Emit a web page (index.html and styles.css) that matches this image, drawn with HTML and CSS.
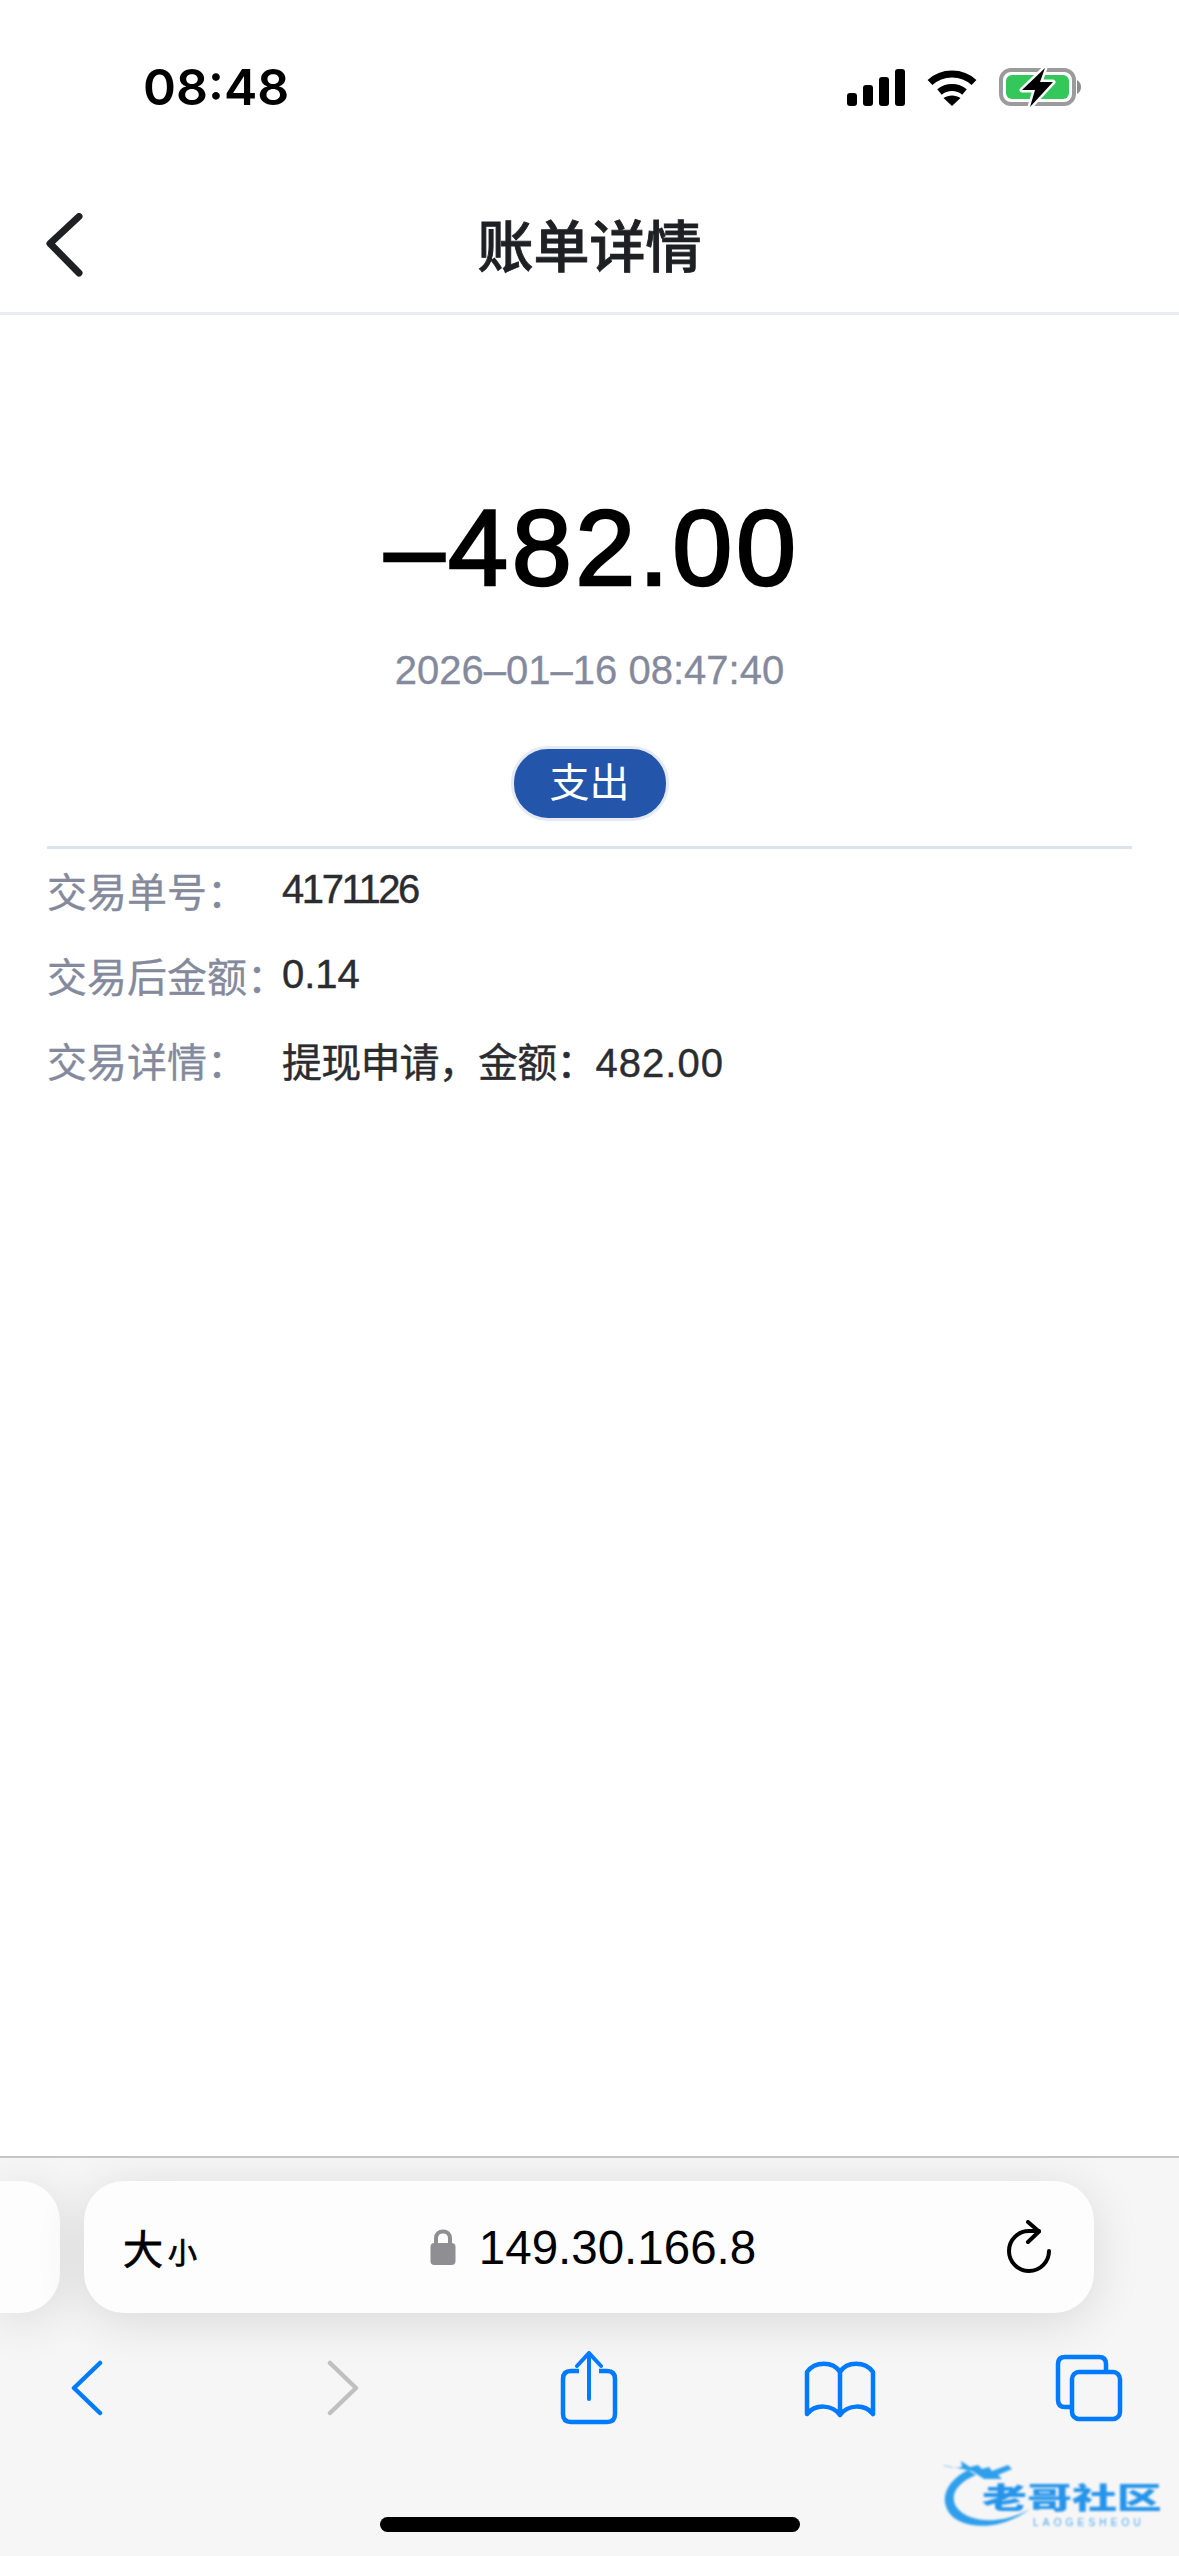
FILE: index.html

```html
<!DOCTYPE html>
<html lang="zh-CN">
<head>
    <meta charset="UTF-8">
    <meta name="viewport" content="width=device-width, initial-scale=1.0">
    <title>账单详情</title>
    <link rel="stylesheet" href="styles.css">
</head>
<body>
    <div class="phone">
        <div class="status-bar">
            <span class="status-time">08:48</span>
            <div class="status-icons">
                <svg class="icon-signal" width="58" height="37" viewBox="0 0 58 37">
                    <rect x="0" y="24" width="10" height="13" rx="3"/>
                    <rect x="16" y="16" width="10" height="21" rx="3"/>
                    <rect x="32" y="8" width="10" height="29" rx="3"/>
                    <rect x="48" y="0" width="10" height="37" rx="3"/>
                </svg>
                <svg class="icon-wifi" width="50" height="37" viewBox="0 0 50 37">
                    <path d="M3 13.5C15 2 35 2 47 13.5" fill="none" stroke="#000" stroke-width="7"/>
                    <path d="M12.5 23C19.500 17 30.500 17 37.500 23" fill="none" stroke="#000" stroke-width="7"/>
                    <path d="M25 37L16.500 29C21.500 25.500 28.500 25.500 33.500 29Z"/>
                </svg>
                <svg class="icon-battery" width="82" height="40" viewBox="0 0 82 40">
                    <rect x="2" y="3" width="73" height="34" rx="10" fill="#fff" stroke="#9b9b9b" stroke-width="4"/>
                    <rect x="7" y="8" width="63" height="24" rx="6" fill="#34c759"/>
                    <path d="M78 13C81 15 82 17 82 20C82 23 81 25 78 27Z" fill="#8c8c8c"/>
                    <path d="M46 1L23 23H36L31 40L54 15H41Z" stroke="#fff" stroke-width="5" paint-order="stroke" stroke-linejoin="round"/>
                </svg>
            </div>
        </div>

        <div class="nav-bar">
            <svg class="nav-back" width="38" height="64" viewBox="0 0 38 64">
                <path d="M33 3.500L4 30.500L33 60" fill="none" stroke="#1f2023" stroke-width="7" stroke-linecap="round" stroke-linejoin="round"/>
            </svg>
            <h1 class="nav-title">账单详情</h1>
        </div>

        <div class="content">
            <div class="summary">
                <div class="amount">–482.00</div>
                <div class="date">2026–01–16 08:47:40</div>
                <span class="type-pill">支出</span>
            </div>
            <div class="details">
                <div class="detail-row">
                    <span class="detail-label">交易单号：</span>
                    <span class="detail-value detail-number">4171126</span>
                </div>
                <div class="detail-row">
                    <span class="detail-label">交易后金额：</span>
                    <span class="detail-value">0.14</span>
                </div>
                <div class="detail-row">
                    <span class="detail-label">交易详情：</span>
                    <span class="detail-value"><span class="detail-note">提现申请，金额：</span><span class="detail-money">482.00</span></span>
                </div>
            </div>
        </div>

        <div class="browser-bar">
            <div class="address-row">
                <div class="tab-peek"></div>
                <div class="address-field">
                    <span class="text-size"><span class="text-size-big">大</span><span class="text-size-small">小</span></span>
                    <div class="url">
                        <svg width="26" height="36" viewBox="0 0 26 36">
                            <path d="M6 15V9.500C6 5 9 2.500 13 2.500C17 2.500 20 5 20 9.500V15" fill="none" stroke="#8e8e93" stroke-width="4"/>
                            <rect x="0.500" y="14" width="25" height="22" rx="4" fill="#8e8e93"/>
                        </svg>
                        <span>149.30.166.8</span>
                    </div>
                    <svg class="reload" width="44" height="54" viewBox="0 0 44 54">
                        <path d="M42 31A20 20 0 1 1 22 11H32" fill="none" stroke="#000" stroke-width="4" stroke-linecap="round"/>
                        <path d="M21 2L32 11.500L21 22" fill="none" stroke="#000" stroke-width="4" stroke-linecap="round" stroke-linejoin="round"/>
                    </svg>
                </div>
            </div>
            <div class="toolbar">
                <svg width="32" height="56" viewBox="0 0 32 56">
                    <path d="M29 3L3 28L29 53" fill="none" stroke="#007aff" stroke-width="4.500" stroke-linecap="round" stroke-linejoin="round"/>
                </svg>
                <svg width="32" height="56" viewBox="0 0 32 56">
                    <path d="M3 3L29 28L3 53" fill="none" stroke="#c0c0c0" stroke-width="4.500" stroke-linecap="round" stroke-linejoin="round"/>
                </svg>
                <svg width="58" height="74" viewBox="0 0 58 74">
                    <path d="M19 20H11C5.500 20 3 23 3 28V63C3 68 5.500 71 11 71H47C52.500 71 55 68 55 63V28C55 23 52.500 20 47 20H39" fill="none" stroke="#007aff" stroke-width="4.500"/>
                    <path d="M29 48V3M17 15L29 2L41 15" fill="none" stroke="#007aff" stroke-width="4" stroke-linecap="round" stroke-linejoin="round"/>
                </svg>
                <svg width="72" height="60" viewBox="0 0 72 60">
                    <path d="M36 14C29 3 11 3 3 14V56C11 46 28 46 36 57C44 46 61 46 69 56V14C61 3 43 3 36 14V57" fill="none" stroke="#007aff" stroke-width="4.500" stroke-linecap="round" stroke-linejoin="round"/>
                </svg>
                <svg width="68" height="68" viewBox="0 0 68 68">
                    <path d="M16 53H10C5.500 53 3 50.500 3 46V10C3 5.500 5.500 3 10 3H44C48.500 3 51 5.500 51 10V18" fill="none" stroke="#007aff" stroke-width="4.500"/>
                    <rect x="17" y="18" width="48" height="47" rx="7" fill="none" stroke="#007aff" stroke-width="4.500"/>
                </svg>
            </div>
            <div class="home-indicator"></div>
        </div>

        <!-- site watermark sits on top of the toolbar -->
        <div class="watermark">
            <svg class="watermark-dragon" width="120" height="74" viewBox="0 0 120 74">
                <path d="M26 15C8 24 -3 40 6 56C16 74 56 78 88 54C60 70 28 68 16 54C6 42 14 28 34 20Z" fill="#2f9fec"/>
                <path d="M0 10C8 13 14 13 20 12L19 6L28 12L36 10L40 14L47 12L50 16L66 10L70 14L56 20L60 24L42 24L30 16Z" fill="#2f9fec"/>
            </svg>
            <div class="watermark-name">老哥社区</div>
            <div class="watermark-sub">LAOGESHEOU</div>
        </div>
    </div>
</body>
</html>
```

FILE: styles.css

```css
* {
    box-sizing: border-box;
}
body {
    margin: 0;
    background-color: #fff;
    font-family: "Liberation Sans", "Noto Sans CJK SC", sans-serif;
    color: #2b2c30;
}
.phone {
    position: relative;
    display: flex;
    flex-direction: column;
    width: 1179px;
    height: 2556px;
    overflow: hidden;
}

/* status bar */
.status-bar {
    display: flex;
    justify-content: space-between;
    align-items: center;
    height: 174px;
    padding: 0 98px 0 143px;
}
.status-time {
    font-family: Inter, sans-serif;
    font-size: 50px;
    font-weight: 600;
    color: #000;
}
.status-icons {
    display: flex;
    align-items: center;
    gap: 22px;
}
.status-icons svg {
    display: block;
}

/* nav */
.nav-bar {
    position: relative;
    display: flex;
    justify-content: center;
    align-items: center;
    height: 141px;
    padding-top: 9px;
    border-bottom: 3px solid #ebebf5;
}
.nav-back {
    position: absolute;
    left: 46px;
    top: 39px;
}
.nav-title {
    margin: 0;
    font-size: 56px;
    font-weight: 500;
    line-height: 70px;
    color: #1f2023;
    -webkit-text-stroke: 0.9px #1f2023;
}

/* bill */
.content {
    flex: 1;
    padding: 0 47px;
}
.summary {
    display: flex;
    flex-direction: column;
    align-items: center;
    padding-top: 168px;
    padding-bottom: 25px;
    border-bottom: 3px solid #dde3ee;
}
.amount {
    padding-left: 5px;
    font-size: 108px;
    letter-spacing: 3.5px;
    line-height: 130px;
    color: #000;
    -webkit-text-stroke: 2.5px #000;
}
.date {
    margin-top: 32px;
    font-size: 40px;
    line-height: 50px;
    color: #848a9c;
    -webkit-text-stroke: 0.3px #848a9c;
}
.type-pill {
    margin-top: 51px;
    padding: 0 36px;
    height: 75px;
    line-height: 69px;
    font-size: 40px;
    color: #fff;
    background-color: #2356ab;
    border: 3px solid #e6eaf3;
    border-radius: 37px;
}
.details {
    margin-top: -2px;
}
.detail-row {
    display: flex;
    align-items: center;
    height: 85px;
    font-size: 40px;
}
.detail-label {
    width: 235px;
    flex-shrink: 0;
    white-space: nowrap;
    color: #848a9c;
    -webkit-text-stroke: 0.3px #848a9c;
}
.detail-value {
    color: #2b2c30;
    -webkit-text-stroke: 0.4px #2b2c30;
}
.detail-number {
    letter-spacing: -2.4px;
}
.detail-note {
    letter-spacing: -0.8px;
}
.detail-money {
    letter-spacing: 1px;
}

/* safari bar */
.browser-bar {
    height: 400px;
    padding-top: 23px;
    overflow: hidden;
    border-top: 2px solid #c6c6c6;
    background-color: #f6f6f6;
}
.address-row {
    display: flex;
    gap: 24px;
}
.tab-peek {
    width: 60px;
    height: 132px;
    background-color: #fdfdfd;
    border-radius: 0 40px 40px 0;
    box-shadow: 0 8px 50px rgba(0, 0, 0, 0.12);
}
.address-field {
    display: flex;
    justify-content: space-between;
    align-items: center;
    width: 1010px;
    height: 132px;
    padding: 0 43px 0 39px;
    background-color: #fdfdfd;
    border-radius: 40px;
    box-shadow: 0 8px 50px rgba(0, 0, 0, 0.12);
}
.text-size {
    color: #000;
    display: flex;
    align-items: baseline;
    -webkit-text-stroke: 0.8px #000;
}
.text-size-big {
    font-size: 40px;
}
.text-size-small {
    font-size: 29px;
    margin-left: 5px;
}
.url {
    display: flex;
    align-items: center;
    gap: 23px;
    font-size: 47.5px;
    color: #000;
    margin-right: 18px;
}
.url svg,
.reload {
    display: block;
}
.toolbar {
    display: grid;
    grid-template-columns: 256px 233px 244px 251px auto;
    justify-items: start;
    align-items: center;
    height: 80px;
    margin-top: 35px;
    padding-left: 71px;
}
.toolbar svg {
    display: block;
}
.home-indicator {
    width: 420px;
    height: 15px;
    margin: 89px auto 0;
    background-color: #000;
    border-radius: 8px;
}

/* watermark */
.watermark {
    position: absolute;
    left: 942px;
    top: 2455px;
    width: 222px;
    height: 74px;
    padding: 26px 0 0 40px;
    filter: blur(0.8px);
}
.watermark-dragon {
    position: absolute;
    left: 0;
    top: 0;
}
.watermark-name {
    position: relative;
    font-family: "Noto Sans CJK SC", sans-serif;
    font-weight: 900;
    font-size: 29px;
    line-height: 30px;
    white-space: nowrap;
    color: #2594ea;
    transform: scaleX(1.55);
    transform-origin: left center;
}
.watermark-sub {
    position: relative;
    margin: 7px 0 0 51px;
    font-size: 10px;
    line-height: 10px;
    letter-spacing: 4.2px;
    white-space: nowrap;
    color: #4aa8ee;
}
```
